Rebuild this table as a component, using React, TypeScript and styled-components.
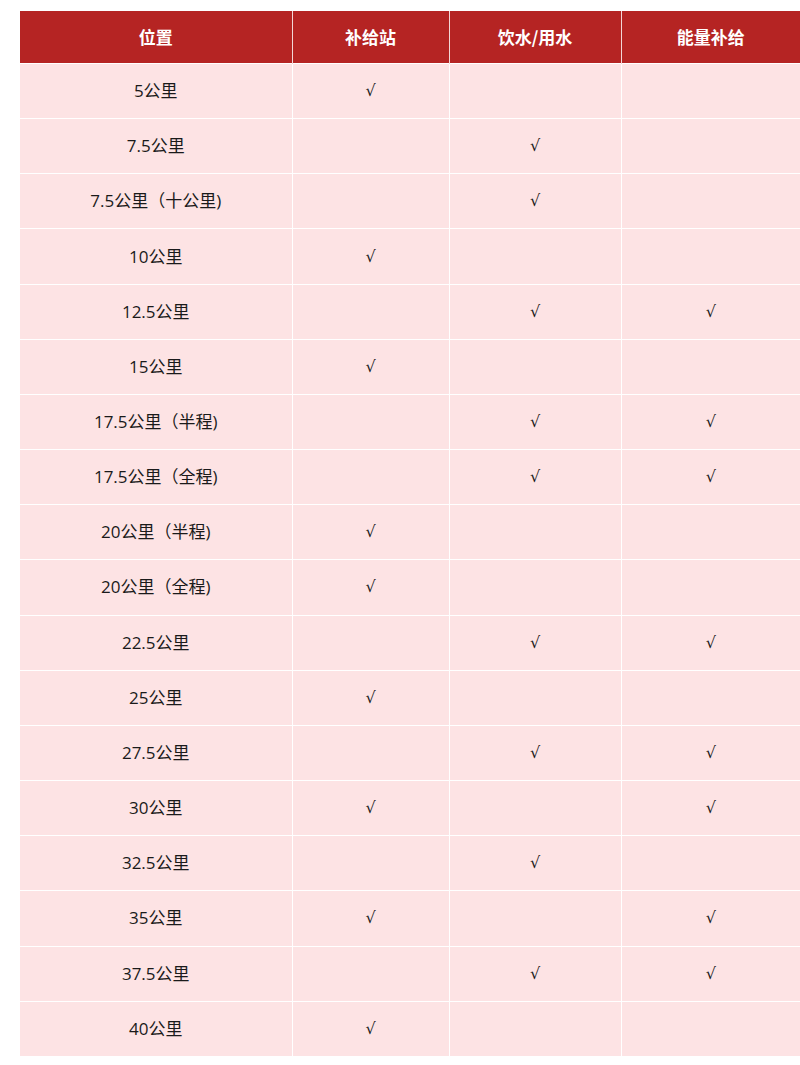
import React from "react";
import styled, { createGlobalStyle } from "styled-components";

const Global = createGlobalStyle`
  html, body { margin: 0; padding: 0; background: #ffffff; }
  body { font-family: "Open Sans", "Noto Sans CJK SC", sans-serif; }
`;

const Page = styled.div`
  padding: 11px 0 0 20px;
`;

const Table = styled.table`
  width: 780px;
  table-layout: fixed;
  border-collapse: collapse;
  border-spacing: 0;
`;

const HeadCell = styled.th`
  height: 50px;
  padding: 0 0 2px 0;
  background: #b52423;
  color: #ffffff;
  font-family: "Noto Sans CJK SC", sans-serif;
  font-size: 17px;
  font-weight: 700;
  text-align: center;
  vertical-align: middle;
  border-left: 1px solid #f3d6d6;
  &:first-child { border-left: none; }
`;

const Row = styled.tr`
  height: 55.17px;
`;

const Cell = styled.td`
  padding: 0 0 3px 0;
  background: #fde3e4;
  color: #1a1a1a;
  font-size: 17px;
  text-align: center;
  vertical-align: middle;
  border-top: 1px solid #ffffff;
  border-left: 1px solid #ffffff;
  &:first-child { border-left: none; }
`;

const Check = styled.span`
  font-family: "DejaVu Sans", sans-serif;
  font-size: 16px;
  color: #1a1a1a;
`;

type R = [string, boolean, boolean, boolean];

const rows: R[] = [
  ["5公里", true, false, false],
  ["7.5公里", false, true, false],
  ["7.5公里（十公里)", false, true, false],
  ["10公里", true, false, false],
  ["12.5公里", false, true, true],
  ["15公里", true, false, false],
  ["17.5公里（半程)", false, true, true],
  ["17.5公里（全程)", false, true, true],
  ["20公里（半程)", true, false, false],
  ["20公里（全程)", true, false, false],
  ["22.5公里", false, true, true],
  ["25公里", true, false, false],
  ["27.5公里", false, true, true],
  ["30公里", true, false, true],
  ["32.5公里", false, true, false],
  ["35公里", true, false, true],
  ["37.5公里", false, true, true],
  ["40公里", true, false, false],
];

const Mark = ({ on }: { on: boolean }) => (on ? <Check>√</Check> : null);

export default function App() {
  return (
    <>
      <Global />
      <Page>
        <Table>
          <colgroup>
            <col style={{ width: 272 }} />
            <col style={{ width: 157 }} />
            <col style={{ width: 172 }} />
            <col style={{ width: 179 }} />
          </colgroup>
          <thead>
            <tr>
              <HeadCell>位置</HeadCell>
              <HeadCell>补给站</HeadCell>
              <HeadCell>饮水/用水</HeadCell>
              <HeadCell>能量补给</HeadCell>
            </tr>
          </thead>
          <tbody>
            {rows.map((r) => (
              <Row key={r[0]}>
                <Cell>{r[0]}</Cell>
                <Cell><Mark on={r[1]} /></Cell>
                <Cell><Mark on={r[2]} /></Cell>
                <Cell><Mark on={r[3]} /></Cell>
              </Row>
            ))}
          </tbody>
        </Table>
      </Page>
    </>
  );
}
